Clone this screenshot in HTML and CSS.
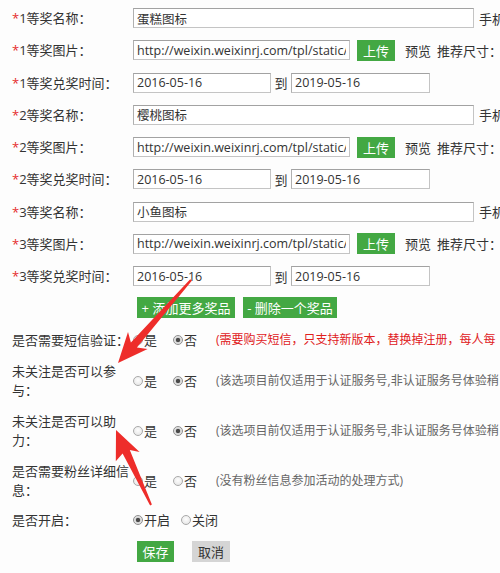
FILE: index.html
```html
<!DOCTYPE html>
<html lang="zh-CN">
<head>
<meta charset="utf-8">
<title>奖品设置</title>
<link rel="stylesheet" href="styles.css">
</head>
<body>
<div class="page">
  <div class="form">
    <div class="row">
      <div class="lbl"><span class="req">*</span>1等奖名称：</div>
      <div class="field"><input class="txt w-name" value="蛋糕图标"><span class="after">手机</span></div>
    </div>
    <div class="row">
      <div class="lbl"><span class="req">*</span>1等奖图片：</div>
      <div class="field"><input class="txt w-url" value="http://weixin.weixinrj.com/tpl/static/"><span class="btn btn-green btn-up">上传</span><span class="preview">预览</span><span class="after2">推荐尺寸：2</span></div>
    </div>
    <div class="row">
      <div class="lbl"><span class="req">*</span>1等奖兑奖时间：</div>
      <div class="field"><input class="txt w-d1" value="2016-05-16"><span class="to">到</span><input class="txt w-d2" value="2019-05-16"></div>
    </div>
    <div class="row">
      <div class="lbl"><span class="req">*</span>2等奖名称：</div>
      <div class="field"><input class="txt w-name" value="樱桃图标"><span class="after">手机</span></div>
    </div>
    <div class="row">
      <div class="lbl"><span class="req">*</span>2等奖图片：</div>
      <div class="field"><input class="txt w-url" value="http://weixin.weixinrj.com/tpl/static/"><span class="btn btn-green btn-up">上传</span><span class="preview">预览</span><span class="after2">推荐尺寸：2</span></div>
    </div>
    <div class="row">
      <div class="lbl"><span class="req">*</span>2等奖兑奖时间：</div>
      <div class="field"><input class="txt w-d1" value="2016-05-16"><span class="to">到</span><input class="txt w-d2" value="2019-05-16"></div>
    </div>
    <div class="row">
      <div class="lbl"><span class="req">*</span>3等奖名称：</div>
      <div class="field"><input class="txt w-name" value="小鱼图标"><span class="after">手机</span></div>
    </div>
    <div class="row">
      <div class="lbl"><span class="req">*</span>3等奖图片：</div>
      <div class="field"><input class="txt w-url" value="http://weixin.weixinrj.com/tpl/static/"><span class="btn btn-green btn-up">上传</span><span class="preview">预览</span><span class="after2">推荐尺寸：2</span></div>
    </div>
    <div class="row">
      <div class="lbl"><span class="req">*</span>3等奖兑奖时间：</div>
      <div class="field"><input class="txt w-d1" value="2016-05-16"><span class="to">到</span><input class="txt w-d2" value="2019-05-16"></div>
    </div>
    <div class="row-btns">
      <span class="btn btn-green btn-add">+ 添加更多奖品</span>
      <span class="btn btn-green btn-del">- 删除一个奖品</span>
    </div>

    <div class="opts-section">
      <div class="orow">
        <div class="olbl">是否需要短信验证：</div>
        <div class="choices">
          <span class="opt yn"><span class="radio"></span>是</span>
          <span class="opt"><span class="radio on"></span>否</span>
        </div>
        <div class="hint red">(需要购买短信，只支持新版本，替换掉注册，每人每</div>
      </div>
      <div class="orow">
        <div class="olbl">未关注是否可以参与：</div>
        <div class="choices">
          <span class="opt yn"><span class="radio"></span>是</span>
          <span class="opt"><span class="radio on"></span>否</span>
        </div>
        <div class="hint">(该选项目前仅适用于认证服务号,非认证服务号体验稍</div>
      </div>
      <div class="orow">
        <div class="olbl">未关注是否可以助力：</div>
        <div class="choices">
          <span class="opt yn"><span class="radio"></span>是</span>
          <span class="opt"><span class="radio on"></span>否</span>
        </div>
        <div class="hint">(该选项目前仅适用于认证服务号,非认证服务号体验稍</div>
      </div>
      <div class="orow">
        <div class="olbl">是否需要粉丝详细信息：</div>
        <div class="choices">
          <span class="opt yn"><span class="radio"></span>是</span>
          <span class="opt"><span class="radio"></span>否</span>
        </div>
        <div class="hint">(没有粉丝信息参加活动的处理方式)</div>
      </div>
      <div class="orow orow-last">
        <div class="olbl">是否开启：</div>
        <div class="choices">
          <span class="opt oc"><span class="radio on"></span>开启</span>
          <span class="opt"><span class="radio"></span>关闭</span>
        </div>
      </div>
    </div>

    <div class="row-save">
      <span class="btn btn-green btn-save">保存</span>
      <span class="btn btn-gray btn-cancel">取消</span>
    </div>
  </div>

  <svg class="arrows" width="500" height="573" viewBox="0 0 500 573" aria-hidden="true">
    <polygon points="118,363 147.6,349.1 136.9,347.6 191.8,280.7 190.2,279.3 130.9,342.4 128,331.9"/>
    <polygon points="116,430 139.6,452.1 129.8,450 151.9,504.6 150.1,505.4 122.6,453.4 115.8,461.3"/>
  </svg>
</div>
</body>
</html>
```

FILE: styles.css
```css
html, body {
  margin: 0;
  padding: 0;
  background: #fdfdfd;
  overflow: hidden;
}

.page {
  position: relative;
  width: 500px;
  height: 573px;
  overflow: hidden;
  font-family: "Open Sans", "Noto Sans CJK SC", sans-serif;
  font-size: 13px;
  color: #333;
}

.form {
  padding-top: 2px;
  white-space: nowrap;
}

.row {
  display: flex;
  align-items: center;
  height: 32.25px;
}

.lbl {
  flex: 0 0 121px;
  padding-left: 12px;
  line-height: 18px;
  color: #333;
}

.req {
  color: #e52b2b;
}

.field {
  display: flex;
  align-items: center;
  flex-shrink: 0;
}

.txt {
  box-sizing: border-box;
  height: 20px;
  margin: 0;
  padding: 0 3px;
  border: 1px solid #c4c4c4;
  border-top-color: #a2a2a2;
  border-left-color: #b0b0b0;
  background: #fff;
  font-family: "Open Sans", "Noto Sans CJK SC", sans-serif;
  font-size: 12.5px;
  color: #333;
  outline: none;
}

.w-name { width: 341px; }
.w-url { width: 217px; }
.w-d1 { width: 138px; }
.w-d2 { width: 139px; }

.after {
  margin-left: 5px;
  flex-shrink: 0;
}

.to {
  width: 20px;
  text-align: center;
}

.preview {
  margin-left: 10px;
}

.after2 {
  margin-left: 6px;
}

.btn {
  display: inline-flex;
  align-items: center;
  justify-content: center;
  box-sizing: border-box;
  height: 21px;
  font-size: 13px;
  flex-shrink: 0;
}

.btn-green {
  background: #43a843;
  color: #fff;
}

.btn-gray {
  background: #d5d5d5;
  color: #333;
}

.btn-up {
  width: 38px;
  margin-left: 7px;
}

.row-btns {
  display: flex;
  align-items: center;
  height: 30px;
  padding-left: 137px;
  gap: 8px;
}

.btn-add { width: 98px; }
.btn-del { width: 94px; }

.opts-section {
  margin-top: 2px;
}

.orow {
  display: flex;
  align-items: center;
  padding: 6.5px 0;
}

.orow-last {
  padding: 5px 0;
}

.olbl {
  box-sizing: border-box;
  flex: 0 0 133px;
  padding-left: 12px;
  line-height: 18.5px;
  white-space: normal;
  color: #333;
}

.choices {
  flex: 0 0 83px;
  display: flex;
  align-items: center;
  line-height: 18.5px;
}

.opt {
  display: inline-flex;
  align-items: center;
}

.opt.yn { margin-right: 16px; }
.opt.oc { margin-right: 11px; }

.radio {
  box-sizing: border-box;
  width: 10px;
  height: 10px;
  margin-right: 1px;
  border-radius: 50%;
  border: 1px solid #a9a9a9;
  background: radial-gradient(circle at 50% 40%, #fdfdfd 0, #e2e2e2 100%);
}

.radio.on {
  border-color: #8e8e8e;
  background: radial-gradient(circle, #4a4a4a 0, #4a4a4a 1.8px, #d9d9d9 2.6px, #f2f2f2 100%);
}

.hint {
  font-size: 12px;
  line-height: 18.5px;
  color: #666;
}

.hint.red {
  color: #e0201c;
}

.row-save {
  display: flex;
  align-items: center;
  padding-left: 137px;
  margin-top: 7px;
  gap: 18px;
}

.btn-save { width: 37px; }
.btn-cancel { width: 38px; }

.arrows {
  position: absolute;
  left: 0;
  top: 0;
  pointer-events: none;
}

.arrows polygon {
  fill: #ee2d2a;
}
```
